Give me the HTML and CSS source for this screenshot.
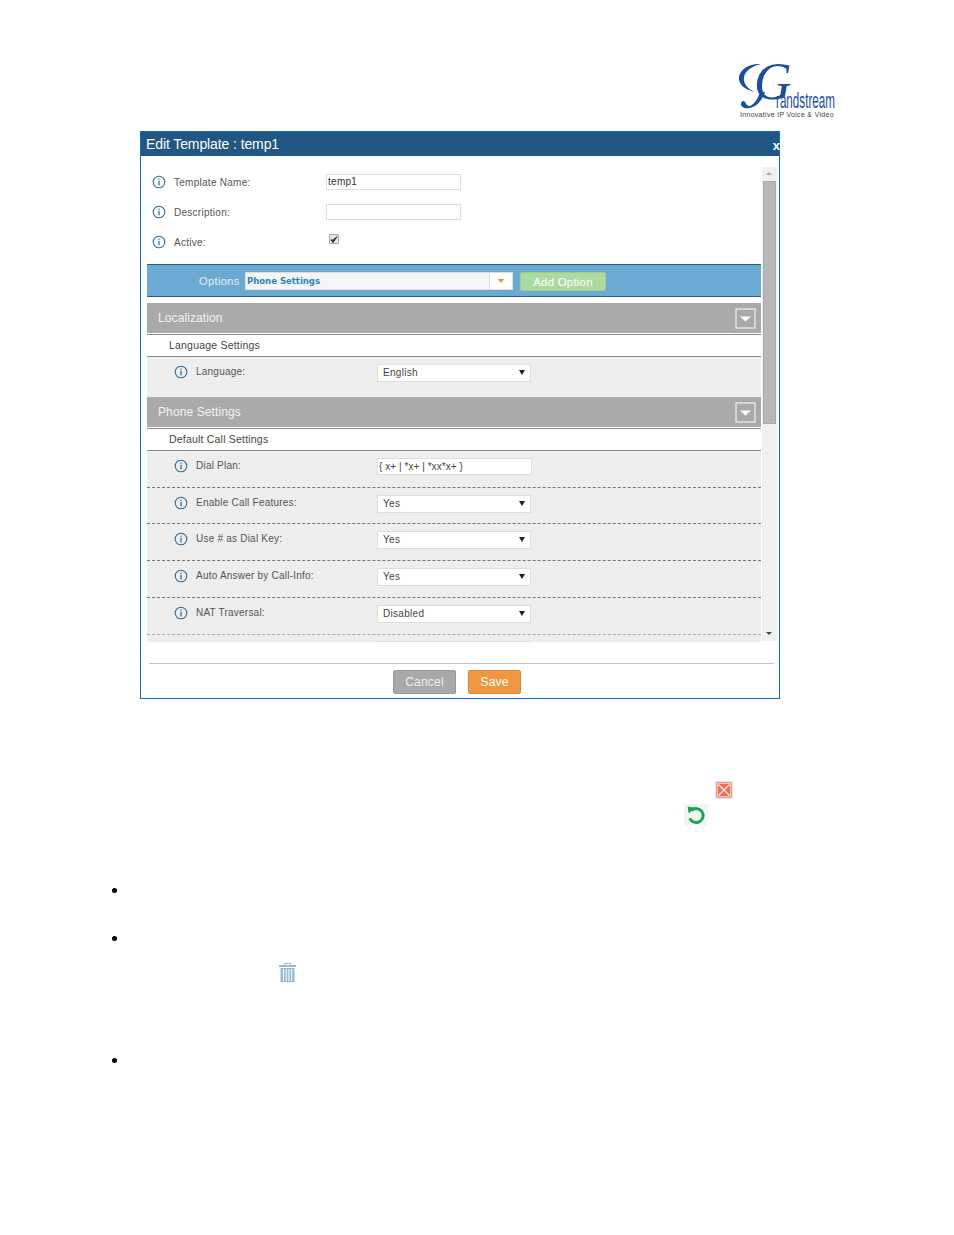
FILE: index.html
```html
<!DOCTYPE html>
<html lang="en">
<head>
<meta charset="utf-8">
<title>Edit Template</title>
<link rel="stylesheet" href="styles.css">
</head>
<body>
<svg width="0" height="0" class="defs">
  <symbol id="info" viewBox="0 0 14 14">
    <circle cx="7" cy="7" r="5.8" fill="none" stroke="#2f6f9f" stroke-width="1.1"/>
    <rect x="6.4" y="5.8" width="1.2" height="4.6" fill="#2f5f85"/>
    <rect x="6.4" y="3.6" width="1.2" height="1.2" fill="#2f5f85"/>
  </symbol>
  <symbol id="chev" viewBox="0 0 21 21">
    <rect x="1" y="1" width="19" height="19" fill="#aaa" stroke="#e6e6e6" stroke-width="1.4"/>
    <path d="M5 8.5h11l-5.5 5z" fill="#fff"/>
  </symbol>
</svg>

<header class="logo-row">
  <div class="logo">
    <svg class="logo-swash" width="98" height="57" viewBox="0 0 98 57">
      <path d="M25 2C14 1 4 7 3 15c-1 7 6 13 16 15-7-3-12-8-11-15C9 9 16 4 25 2z" fill="#1b4d9e"/>
      <path d="M24 30C22 36 19 42 14 44c-3 0-4-2-5-4-1-2-4-1-4 2 0 3 4 5 8 4 8-1 13-8 16-16z" fill="#1b4d9e"/>
    </svg>
    <span class="logo-g">G</span>
    <span class="logo-word">randstream</span>
    <span class="logo-tag">Innovative IP Voice &amp; Video</span>
  </div>
</header>

<section class="dialog">
  <div class="titlebar"><span>Edit Template : temp1</span><span class="close">x</span></div>
  <div class="scroller">
    <div class="content">
      <div class="basics">
        <div class="field">
          <svg class="ic"><use href="#info"/></svg><span class="flabel">Template Name:</span>
          <span class="tinput">temp1</span>
        </div>
        <div class="field">
          <svg class="ic"><use href="#info"/></svg><span class="flabel">Description:</span>
          <span class="tinput"></span>
        </div>
        <div class="field">
          <svg class="ic"><use href="#info"/></svg><span class="flabel">Active:</span>
          <span class="check"><svg width="9" height="9" viewBox="0 0 9 9"><path d="M1 5l2.4 3L8 1.2 3.4 5z" fill="#333" stroke="#333"/></svg></span>
        </div>
      </div>
      <div class="options">
        <span class="opt-label">Options</span>
        <div class="combo"><span class="combo-text">Phone Settings</span><span class="combo-btn"><i class="caret"></i></span></div>
        <span class="add">Add Option</span>
      </div>

      <div class="band first"><span>Localization</span><svg class="chev"><use href="#chev"/></svg></div>
      <div class="sub">Language Settings</div>
      <div class="row tall">
        <svg class="ic"><use href="#info"/></svg><span class="rlabel">Language:</span>
        <span class="sel">English<i class="tri"></i></span>
      </div>

      <div class="band"><span>Phone Settings</span><svg class="chev"><use href="#chev"/></svg></div>
      <div class="sub">Default Call Settings</div>
      <div class="row dash">
        <svg class="ic"><use href="#info"/></svg><span class="rlabel">Dial Plan:</span>
        <span class="dial">{ x+ | *x+ | *xx*x+ }</span>
      </div>
      <div class="row dash">
        <svg class="ic"><use href="#info"/></svg><span class="rlabel">Enable Call Features:</span>
        <span class="sel">Yes<i class="tri"></i></span>
      </div>
      <div class="row dash">
        <svg class="ic"><use href="#info"/></svg><span class="rlabel">Use # as Dial Key:</span>
        <span class="sel">Yes<i class="tri"></i></span>
      </div>
      <div class="row dash">
        <svg class="ic"><use href="#info"/></svg><span class="rlabel">Auto Answer by Call-Info:</span>
        <span class="sel">Yes<i class="tri"></i></span>
      </div>
      <div class="row dash faint">
        <svg class="ic"><use href="#info"/></svg><span class="rlabel">NAT Traversal:</span>
        <span class="sel">Disabled<i class="tri"></i></span>
      </div>
      <div class="row">
        <span class="sel spacer"></span>
      </div>
    </div>
    <div class="scrollbar">
      <span class="arrow up"></span>
      <span class="thumb"></span>
      <span class="arrow down"></span>
    </div>
  </div>
  <div class="footer">
    <span class="btn cancel">Cancel</span>
    <span class="btn save">Save</span>
  </div>
</section>

<section class="below">
  <div class="icon-line one">
    <svg width="18" height="18" viewBox="0 0 18 18"><rect width="18" height="18" fill="#e8e8e8"/><rect x="2" y="2" width="14" height="14" fill="#f26a50" stroke="#d9583f"/><path d="M3.5 3.5l11 11M14.5 3.5l-11 11" stroke="#fff" stroke-width="1.1"/><rect x="2.5" y="2.5" width="13" height="13" fill="none" stroke="#fbd8cf" stroke-width=".8"/></svg>
  </div>
  <div class="icon-line two">
    <svg width="24" height="22" viewBox="0 0 24 22"><rect width="24" height="22" fill="#f4f4f4"/><path d="M7.4 6.4a7 7 0 1 1-1.6 8" fill="none" stroke="#14a650" stroke-width="2.8"/><path d="M3.6 2.6l7.2 1.2-6 5.8z" fill="#14a650"/></svg>
  </div>
  <ul class="bullets">
    <li class="b1"></li>
    <li class="b2"><svg class="trash" width="17" height="20" viewBox="0 0 17 20"><path d="M5.5 2.5V.5h6v2" fill="none" stroke="#94bccb"/><rect y="2" width="17" height="2" fill="#94bccb"/><path d="M1.5 5h14v14h-14z" fill="#94bccb"/><path d="M4.5 6v12M7.2 6v12M9.9 6v12M12.6 6v12" stroke="#fff"/></svg></li>
    <li class="b3"></li>
  </ul>
</section>
</body>
</html>
```
FILE: styles.css
```css
* { box-sizing: border-box; }
html, body { margin: 0; padding: 0; }
body {
  width: 954px;
  height: 1235px;
  background: #fff;
  font-family: "Liberation Sans", Arial, sans-serif;
  overflow: hidden;
}
.defs { position: absolute; }

/* logo */
.logo-row {
  height: 131px;
  padding: 62px 120px 0 0;
  display: flex;
  justify-content: flex-end;
}
.logo { position: relative; width: 98px; height: 57px; }
.logo-swash { position: absolute; left: 0; top: 0; }
.logo-g {
  position: absolute;
  left: 18px;
  top: 9px;
  font: italic 52px/22px "Liberation Serif", serif;
  height: 22px;
  color: #1b4d9e;
}
.logo-word {
  position: absolute;
  left: 40px;
  top: 31px;
  font-size: 22px;
  line-height: 16px;
  color: #1b4d9e;
  transform: scaleX(.53);
  transform-origin: left top;
  white-space: nowrap;
}
.logo-tag {
  position: absolute;
  left: 4px;
  top: 48px;
  font-size: 7px;
  line-height: 9px;
  letter-spacing: .3px;
  color: #444;
  white-space: nowrap;
}

/* dialog */
.dialog {
  margin-left: 140px;
  width: 640px;
  height: 568px;
  border: 1px solid #0a70bd;
  display: flex;
  flex-direction: column;
}
.titlebar {
  height: 24px;
  background: #225783;
  color: #fff;
  font-size: 14px;
  letter-spacing: -.1px;
  padding-left: 5px;
  display: flex;
  justify-content: space-between;
  align-items: center;
  flex: none;
}
.close { font-weight: bold; font-size: 13px; margin: 2px -1px 0 0; }
.scroller {
  margin-top: 11px;
  height: 475px;
  display: flex;
  padding-left: 6px;
  flex: none;
}
.content { width: 614px; height: 475px; overflow: hidden; flex: none; }
.basics { height: 97px; }
.field {
  height: 30px;
  display: flex;
  align-items: center;
  padding-left: 5px;
  font-size: 10px;
  letter-spacing: .27px;
  color: #555;
}
.ic { width: 14px; height: 14px; flex: none; }
.flabel { width: 152px; margin-left: 8px; flex: none; }
.tinput {
  width: 135px;
  height: 16px;
  border: 1px solid #ddd;
  background: #fff;
  color: #333;
  line-height: 13px;
  padding-left: 1px;
}
.check {
  width: 10px;
  height: 10px;
  margin: -6px 0 0 3px;
  border: 1px solid #aaa;
  border-radius: 1px;
  background: #e4e4e4;
  display: flex;
}
.options {
  height: 33px;
  background: #6baad2;
  border-top: 1px solid #2b5d80;
  border-bottom: 1px solid #2b5d80;
  display: flex;
  align-items: center;
  padding-left: 52px;
}
.opt-label { width: 46px; font-size: 11px; letter-spacing: .4px; color: #e6f0f6; }
.combo {
  width: 268px;
  height: 18px;
  background: #f5f5f5;
  border: 1px solid #ddd;
  display: flex;
  justify-content: space-between;
}
.combo-text {
  padding-left: 1px;
  font: bold 8.5px/17px "DejaVu Sans", sans-serif;
  color: #2a86bd;
}
.combo-btn {
  width: 23px;
  background: #fff;
  border-left: 1px solid #ddd;
  display: flex;
  align-items: center;
  justify-content: center;
}
.caret {
  width: 0;
  height: 0;
  border: 3px solid transparent;
  border-top: 4px solid #ee8b1c;
  border-bottom: 0;
}
.add {
  width: 86px;
  height: 19px;
  margin: 1px 0 0 7px;
  background: #addb9f;
  border: 1px solid #9fcc90;
  border-radius: 2px;
  color: #fff;
  font-size: 11.5px;
  line-height: 18px;
  text-align: center;
  letter-spacing: .2px;
}
.band {
  height: 32px;
  background: #aaa;
  border-bottom: 1px solid #888;
  box-shadow: inset 0 -1px 0 #fff;
  color: #f2f2f2;
  font-size: 12px;
  letter-spacing: .1px;
  padding-left: 11px;
  display: flex;
  justify-content: space-between;
  align-items: center;
}
.band span { margin-top: -2px; }
.band.first { margin-top: 6px; }
.chev { width: 21px; height: 21px; margin: 0 5px 0 0; }
.sub {
  height: 22px;
  background: #fff;
  border-bottom: 1px solid #888;
  padding-left: 22px;
  font-size: 10.5px;
  line-height: 21px;
  letter-spacing: .2px;
  color: #444;
}
.row {
  height: 36.72px;
  background: #eee;
  display: flex;
  align-items: flex-start;
  padding: 8px 0 0 27px;
  font-size: 10px;
  letter-spacing: .22px;
  color: #555;
}
.row.tall { height: 40px; }
.row.dash { border-bottom: 1px dashed #777; }
.row.faint { border-bottom-color: #aaa; }
.rlabel { width: 181px; margin-left: 8px; flex: none; padding-top: 1px; }
.sel {
  width: 154px;
  height: 18px;
  border: 1px solid #ddd;
  background: #fff;
  color: #444;
  font-size: 10px;
  letter-spacing: .3px;
  line-height: 16px;
  padding-left: 5px;
  position: relative;
  margin-top: -1px;
}
.spacer { margin: -2px 0 0 203px; }
.tri {
  position: absolute;
  right: 5px;
  top: 5px;
  width: 0;
  height: 0;
  border: 3px solid transparent;
  border-top: 5px solid #222;
  border-bottom: 0;
}
.dial {
  width: 155px;
  height: 17px;
  margin-top: -1px;
  border: 1px solid #ddd;
  background: #fff;
  color: #444;
  line-height: 15px;
  padding-left: 1px;
  letter-spacing: .05px;
}
.scrollbar {
  width: 15px;
  height: 474px;
  margin-left: 1px;
  background: #f0f0f0;
  display: flex;
  flex-direction: column;
  align-items: center;
}
.arrow { height: 14px; width: 100%; flex: none; position: relative; }
.arrow::after {
  content: "";
  position: absolute;
  left: 4px;
  border: 3px solid transparent;
}
.up::after { top: 5px; border-top: 0; border-bottom: 3px solid #aaa; }
.down { margin-top: auto; }
.down::after { top: 5px; border-bottom: 0; border-top: 3px solid #444; }
.thumb {
  width: 13px;
  height: 243px;
  background: #b8b8b8;
  border: 1px solid #aaa;
}
.footer {
  margin: 21px 5px 0 8px;
  border-top: 1px solid #c4c4c4;
  padding: 6px 0 0 244px;
  display: flex;
  gap: 12px;
}
.btn {
  height: 24px;
  border-radius: 2px;
  color: #fff;
  font-size: 12px;
  line-height: 22px;
  text-align: center;
  letter-spacing: .2px;
}
.cancel { width: 63px; background: #a9a9a9; border: 1px solid #999; color: #eee; }
.save { width: 53px; background: #ef9740; border: 1px solid #dd8a38; }

/* below */
.below { position: relative; }
.icon-line { display: flex; justify-content: flex-end; }
.icon-line svg { display: block; }
.icon-line.one { padding: 82px 221px 0 0; height: 105px; }
.icon-line.two { margin-top: 0; padding: 0 246px 0 0; height: 22px; }
.bullets {
  margin: 0;
  padding: 0 0 0 129px;
  font-size: 18px;
  line-height: 16px;
}
.bullets li { height: 16px; position: relative; }
.b1 { margin-top: 55px; }
.b2 { margin-top: 32px; }
.b3 { margin-top: 106px; }
.trash { position: absolute; left: 150px; top: 34px; }
```
